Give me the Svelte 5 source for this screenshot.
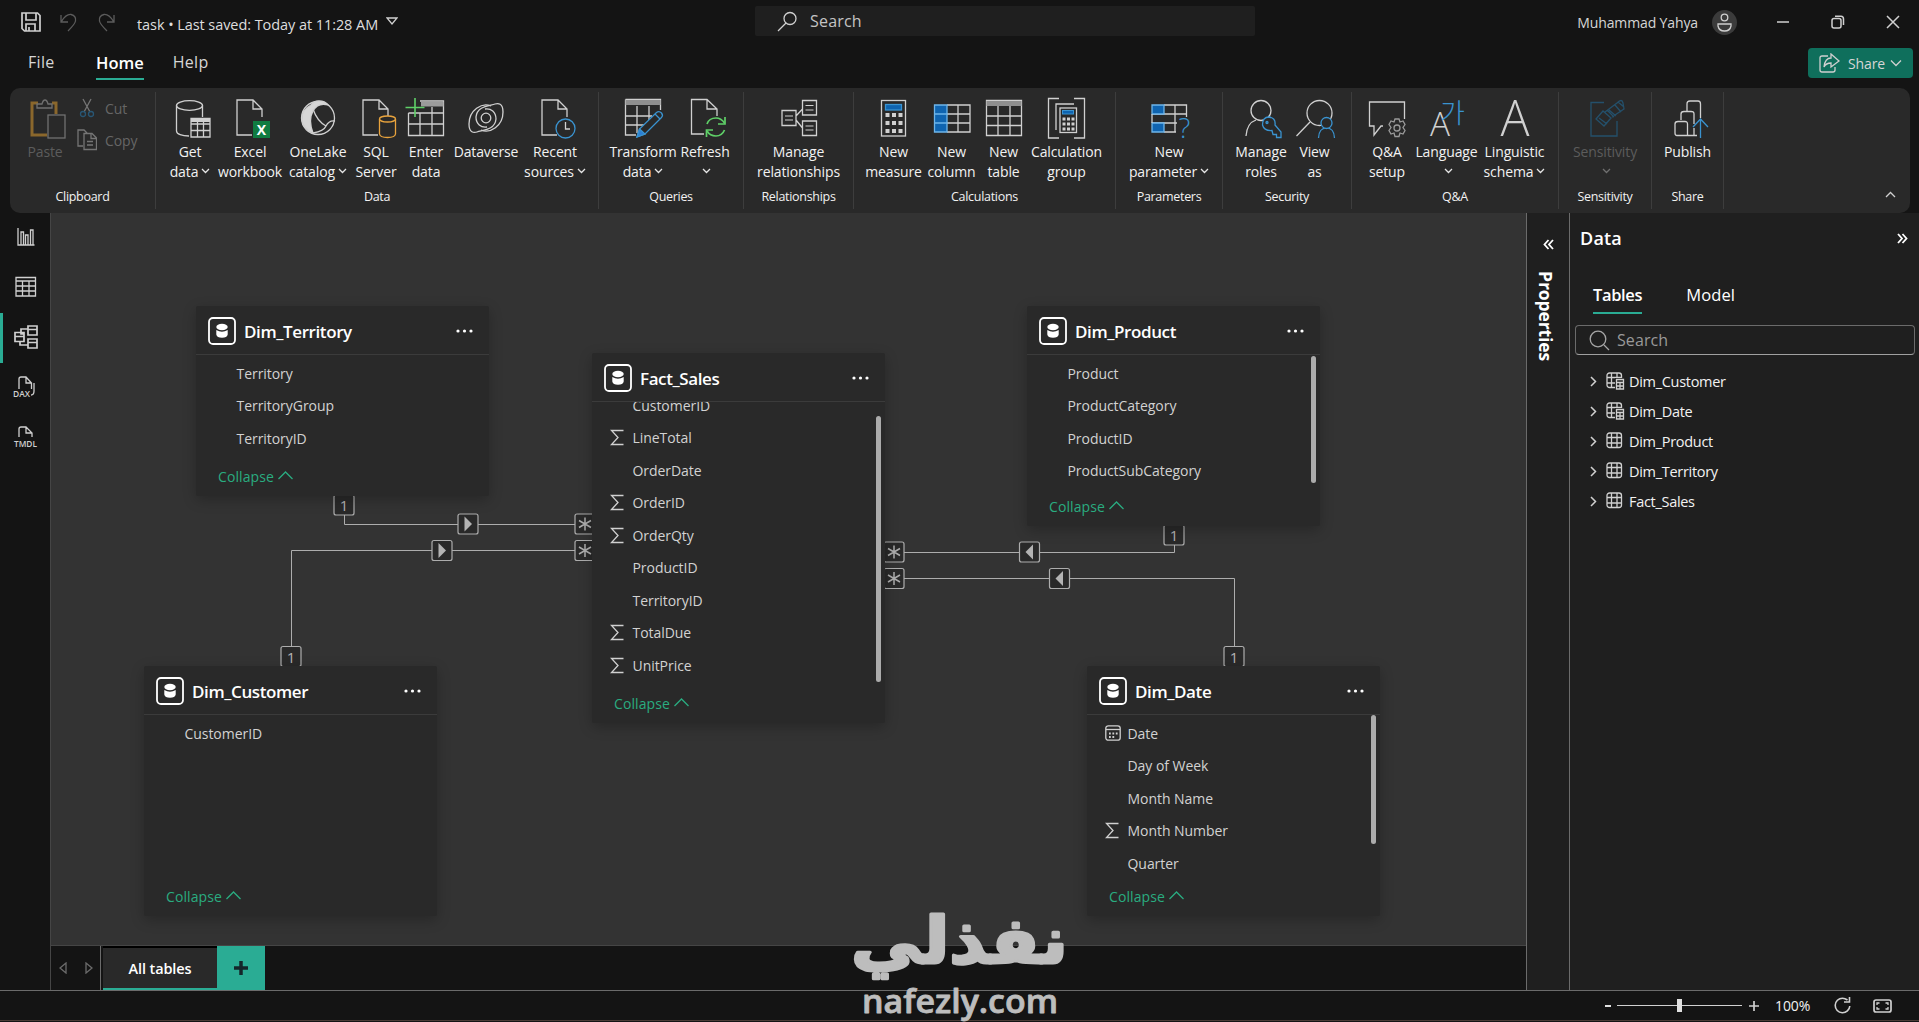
<script lang="ts">
  interface Command {
    icon: string;
    lines: string[];
    width: number;
    menu?: boolean;
    disabled?: boolean;
  }
  interface Group {
    label: string;
    width: number;
    commands: Command[];
  }
  interface Field {
    name: string;
    icon?: 'sum' | 'date';
  }
  interface TableCard {
    name: string;
    x: number;
    y: number;
    height: number;
    fields: Field[];
    scrolled?: boolean;
    thumb?: { top: number; height: number };
  }

  const groups: Group[] = [
    {
      label: 'Data',
      width: 443,
      commands: [
        { icon: 'get', lines: ['Get', 'data'], width: 44, menu: true },
        { icon: 'excel', lines: ['Excel', 'workbook'], width: 76 },
        { icon: 'onelake', lines: ['OneLake', 'catalog'], width: 60, menu: true },
        { icon: 'sql', lines: ['SQL', 'Server'], width: 56 },
        { icon: 'enter', lines: ['Enter', 'data'], width: 44 },
        { icon: 'dataverse', lines: ['Dataverse'], width: 76 },
        { icon: 'recent', lines: ['Recent', 'sources'], width: 62, menu: true }
      ]
    },
    {
      label: 'Queries',
      width: 145,
      commands: [
        { icon: 'transform', lines: ['Transform', 'data'], width: 68, menu: true },
        { icon: 'refresh', lines: ['Refresh', ''], width: 56, menu: true }
      ]
    },
    {
      label: 'Relationships',
      width: 110,
      commands: [{ icon: 'relations', lines: ['Manage', 'relationships'], width: 108 }]
    },
    {
      label: 'Calculations',
      width: 262,
      commands: [
        { icon: 'measure', lines: ['New', 'measure'], width: 60 },
        { icon: 'column', lines: ['New', 'column'], width: 56 },
        { icon: 'table', lines: ['New', 'table'], width: 48 },
        { icon: 'calc', lines: ['Calculation', 'group'], width: 78 }
      ]
    },
    {
      label: 'Parameters',
      width: 107,
      commands: [{ icon: 'parameter', lines: ['New', 'parameter'], width: 105, menu: true }]
    },
    {
      label: 'Security',
      width: 129,
      commands: [
        { icon: 'roles', lines: ['Manage', 'roles'], width: 55 },
        { icon: 'viewas', lines: ['View', 'as'], width: 52 }
      ]
    },
    {
      label: 'Q&A',
      width: 207,
      commands: [
        { icon: 'qa', lines: ['Q&A', 'setup'], width: 50 },
        { icon: 'language', lines: ['Language', ''], width: 69, menu: true },
        { icon: 'linguistic', lines: ['Linguistic', 'schema'], width: 67, menu: true }
      ]
    },
    {
      label: 'Sensitivity',
      width: 93,
      commands: [{ icon: 'sensitivity', lines: ['Sensitivity', ''], width: 91, menu: true, disabled: true }]
    },
    {
      label: 'Share',
      width: 72,
      commands: [{ icon: 'publish', lines: ['Publish'], width: 71 }]
    }
  ];

  const cards: TableCard[] = [
    {
      name: 'Dim_Territory',
      x: 145,
      y: 93,
      height: 190,
      fields: [{ name: 'Territory' }, { name: 'TerritoryGroup' }, { name: 'TerritoryID' }]
    },
    {
      name: 'Fact_Sales',
      x: 541,
      y: 140,
      height: 370,
      scrolled: true,
      thumb: { top: 63, height: 266 },
      fields: [
        { name: 'CustomerID' },
        { name: 'LineTotal', icon: 'sum' },
        { name: 'OrderDate' },
        { name: 'OrderID', icon: 'sum' },
        { name: 'OrderQty', icon: 'sum' },
        { name: 'ProductID' },
        { name: 'TerritoryID' },
        { name: 'TotalDue', icon: 'sum' },
        { name: 'UnitPrice', icon: 'sum' }
      ]
    },
    {
      name: 'Dim_Product',
      x: 976,
      y: 93,
      height: 220,
      thumb: { top: 50, height: 127 },
      fields: [
        { name: 'Product' },
        { name: 'ProductCategory' },
        { name: 'ProductID' },
        { name: 'ProductSubCategory' }
      ]
    },
    { name: 'Dim_Customer', x: 93, y: 453, height: 250, fields: [{ name: 'CustomerID' }] },
    {
      name: 'Dim_Date',
      x: 1036,
      y: 453,
      height: 250,
      thumb: { top: 49, height: 129 },
      fields: [
        { name: 'Date', icon: 'date' },
        { name: 'Day of Week' },
        { name: 'Month Name' },
        { name: 'Month Number', icon: 'sum' },
        { name: 'Quarter' }
      ]
    }
  ];

  const lines = [
    'M293 283V311H542',
    'M240 453V337H542',
    'M833 339H1123V312',
    'M833 365H1183V453'
  ];
  const ends = [
    { x: 293, y: 292, kind: 'one' },
    { x: 240, y: 443.5, kind: 'one' },
    { x: 1123, y: 322, kind: 'one' },
    { x: 1183, y: 443.5, kind: 'one' },
    { x: 534, y: 311, kind: 'many' },
    { x: 534, y: 337.5, kind: 'many' },
    { x: 843, y: 339, kind: 'many' },
    { x: 843, y: 365.5, kind: 'many' },
    { x: 417, y: 311, kind: 'right' },
    { x: 391, y: 337.5, kind: 'right' },
    { x: 978.5, y: 339, kind: 'left' },
    { x: 1008.5, y: 365.5, kind: 'left' }
  ];

  const tables = [
    { name: 'Dim_Customer', calculated: true },
    { name: 'Dim_Date', calculated: true },
    { name: 'Dim_Product', calculated: false },
    { name: 'Dim_Territory', calculated: false },
    { name: 'Fact_Sales', calculated: false }
  ];

  const views = ['report', 'data', 'model', 'dax', 'tmdl'];
  let activeView = $state('model');
</script>

{#snippet caret()}
  <svg class="caret" width="9" height="6" viewBox="0 0 9 6"><path d="M1 1l3.5 3.5L8 1" /></svg>
{/snippet}

{#snippet page()}
  <path d="M2 38H-13V3H3L12 12V20M3 3V12H12" />
{/snippet}

{#snippet ribbonIcon(name: string)}
  <svg class="ribbon-icon" width="44" height="44" viewBox="-22 0 44 44">
    {#if name === 'paste'}
      <g class="dim">
        <path d="M-7 6H-13V38H2M7 6H11V17" stroke="#8a672c" stroke-width="3" />
        <path d="M-8 11V7H-3Q-2 3 0 3Q2 3 3 7H7V11Z" />
        <rect x="3" y="18" width="17" height="23" fill="#292929" />
      </g>
    {:else if name === 'get'}
      <ellipse cx="-.5" cy="8.5" rx="13" ry="4.8" />
      <path d="M-13.5 8.5V34C-13.5 37 -8 39 -1 39M12.500 8.500V20" />
      <path d="M1 21.500H20V40H1ZM1 27H20M1 33.500H20M7.500 25V40M13.500 25V40" />
      <path d="M1 23.500H20" stroke-width="3" />
    {:else if name === 'excel'}
      {@render page()}
      <rect x="3" y="24" width="17" height="17" fill="#107c41" stroke="none" />
      <text x="11.500" y="37.500" class="glyph-x">X</text>
    {:else if name === 'onelake'}
      <circle cx="0" cy="21" r="16.500" />
      <path d="M-7 8Q-4 4 1 4Q7 4 10 8Q0 5 -5 14Q-10 23 -5 36Q-15 32 -16 23Q-17 13 -7 8Z" fill="#d6d6d6" />
      <path d="M-5 12Q-1 24 8 29M-5 36Q6 34 8 29Q11 23 17 24" />
    {:else if name === 'sql'}
      {@render page()}
      <g stroke="#e8a33d">
        <rect x="3" y="19" width="17" height="22" fill="#292929" stroke="none" />
        <ellipse cx="11.500" cy="22" rx="8" ry="3" />
        <path d="M3.500 22V37Q4 40.500 11.500 40.500Q19 40.500 19.500 37V22" />
      </g>
    {:else if name === 'enter'}
      <path d="M-17.500 16V38.500H17.500V4H-6M-17.500 16H17.500M-17.500 27H17.500M-6 16V38.500M6 10V38.500" />
      <path d="M-5 7H17.500" stroke="#9b9b9b" stroke-width="5" />
      <path d="M-11 1V20M-20.500 10.500H-1.500" stroke="#5fd068" stroke-width="1.600" />
    {:else if name === 'dataverse'}
      <circle cx="0" cy="21" r="4.800" />
      <path d="M5 9C-4 5 -17 13 -17 27C-17 36 -12 36 -9 35C-3 33 9 33 10 22C10 15 5 11 -1 12" />
      <path d="M-5 33C4 37 17 29 17 15C17 6 12 6 9 7C3 9 -9 9 -10 20C-10 27 -5 31 1 30" />
    {:else if name === 'recent'}
      {@render page()}
      <circle cx="10.500" cy="31.500" r="9.500" fill="#292929" stroke="#3a93d0" />
      <path d="M10.500 25V32H15" />
    {:else if name === 'transform'}
      <path d="M-17.500 2.500H17.500V13M-17.500 2.500V38H-7M-17.500 19H9M-17.500 28H1M-6 9V36M6 9V23" />
      <path d="M-17.500 5.500H17.500" stroke="#8f8f8f" stroke-width="5" />
      <g stroke="#3a93d0">
        <path d="M-6 40L-3.500 32L13.500 15.500Q16 13.500 18.500 16Q20.500 18.500 18.500 20.500L2 37Z" fill="#292929" />
        <path d="M-6 40L-3.500 32L2 37Z" fill="#2b7fd4" />
        <path d="M12 17L17 22" />
      </g>
    {:else if name === 'refresh'}
      <path d="M-1 37H-13.500V2.500H2L12 12V19M2 2.500V12H12" />
      <g stroke="#5fd068" stroke-width="1.700">
        <path d="M2 27Q4 21 11 21Q16 21 19.500 26M19.500 33Q17 39 11 39Q5 39 2 34" />
        <path d="M20 20V27H13M1.500 40V33H8" />
      </g>
    {:else if name === 'relations'}
      <path d="M-17 13.500H-3V28.500H-17ZM3.500 3.500H17.500V18H3.500ZM3.500 24H17.500V38.500H3.500ZM-3 19L3.500 12M-3 23L3.500 31" />
      <path d="M-14 19H-6M-14 23H-6M6.500 8.500H14.500M6.500 13H14.500M6.500 29H14.500M6.500 33H14.500" stroke-width="1" />
    {:else if name === 'measure'}
      <rect x="-12.500" y="3.500" width="24" height="35.500" />
      <rect x="-8.500" y="7.500" width="16" height="5.500" fill="#0f64b0" stroke="#3a93d0" />
      <path d="M-8.500 18H8.500M-8.500 26H8.500M-8.500 34H8.500" stroke-width="4" stroke-dasharray="4 2.500" />
    {:else if name === 'column'}
      <path d="M-5 8H18V35H-5M-5 17H18M-5 26H18M6 8V35" />
      <path d="M-17.500 8H-5V35H-17.500ZM-17.500 17H-5M-17.500 26H-5" fill="#0f64b0" stroke="#6db5ea" />
    {:else if name === 'table'}
      <path d="M-17.500 3.500H17.500V38.500H-17.500ZM-17.500 19H17.500M-17.500 28.500H17.500M-6 9V38.500M6 9V38.500" />
      <path d="M-17.500 6.500H17.500" stroke="#8f8f8f" stroke-width="5" />
    {:else if name === 'calc'}
      <path d="M-8 1.500H-18.500V41H-8M7 1.500H17.500V41H7" />
      <path d="M-11 33V7H7" />
      <rect x="-7" y="11" width="16.500" height="24.500" />
      <rect x="-4.500" y="13.500" width="11" height="3.500" fill="#0f64b0" stroke="#3a93d0" stroke-width="1" />
      <path d="M-4.500 22H7.500M-4.500 27H7.500M-4.500 32H7.500" stroke-width="3" stroke-dasharray="3 1.500" />
    {:else if name === 'parameter'}
      <path d="M-5 8H17.500V20M-5 35H7M-17 17H17.500M-17 26H8M6 8V35" />
      <path d="M-17 8H-5V17H-17ZM-17 26H-5V35H-17Z" fill="#0f64b0" stroke="#6db5ea" />
      <path d="M-17 17V26" />
      <text x="15.500" y="41" class="glyph-q">?</text>
    {:else if name === 'roles'}
      <circle cx="0" cy="13.500" r="10" />
      <path d="M-15 39Q-14 26 -5 23" />
      <g stroke="#3a93d0">
        <path d="M11 33.500Q3 34 1.500 28Q1.500 20 8 20Q15 21 14 28L20 35V40.500H15.500V37.500H12Z" fill="#292929" />
        <circle cx="6" cy="25.500" r="1" />
      </g>
    {:else if name === 'viewas'}
      <circle cx="4.500" cy="16" r="12.500" />
      <path d="M-5 25L-18.500 39" />
      <g stroke="#3a93d0" fill="#292929">
        <path d="M3.500 41C4 34 6 31 11.500 31C17 31 19 34 19.500 41" />
        <circle cx="11.500" cy="26" r="5.500" />
      </g>
    {:else if name === 'qa'}
      <path d="M-4 29H-6L-13 38V29H-17.500V5H17.500V22" />
      <g stroke="#9b9b9b">
        <path d="M8 22h4l1 3 3-1 2 3.500-2 3 2 3-2 3.500-3-1-1 3.500h-4l-1-3.500-3 1-2-3.500 2-3-2-3L4 24l3 1z" fill="#292929" />
        <circle cx="10" cy="31" r="3" />
      </g>
    {:else if name === 'language'}
      <text x="-17" y="39" class="glyph-a" font-size="33" textLength="20" lengthAdjust="spacingAndGlyphs">A</text>
      <text x="-7" y="26" class="glyph-ga">가</text>
    {:else if name === 'linguistic'}
      <text x="-14.500" y="39" class="glyph-a" font-size="49" textLength="29" lengthAdjust="spacingAndGlyphs">A</text>
    {:else if name === 'sensitivity'}
      <g stroke="#24506b">
        <path d="M-1 5.500H-14V39H12V24" />
        <path d="M-9 22L-2 14L6 21L-1 29ZM-6 21L2 27M2 13L9 20M0 15L12 6Q17 1 18 6L19 12L7 20M10 8L16 15M13 5L19 10M4 13L11 19" />
      </g>
    {:else if name === 'publish'}
      <path d="M-1 14V7Q-1 4 2 4H10Q12.500 4 12.500 7V21M-7 23V17Q-7 14.500 -4 14.500H3Q6 14.500 6 17V27M-13 27Q-13 24.500 -10 24.500H-3Q-.5 24.500 -.5 27V38.500H-11Q-13 38.500 -13 36ZM-.5 38.500H9M6 31V38.500" />
      <path d="M12.500 41V22M5 30L12.500 22L20 30" stroke="#3a93d0" />
    {/if}
  </svg>
{/snippet}

{#snippet command(c: Command)}
  <button class="command" class:disabled={c.disabled} style:width="{c.width}px">
    {@render ribbonIcon(c.icon)}
    {#each c.lines as line, i}
      <span class="line">
        {line}
        {#if c.menu && i === c.lines.length - 1}{@render caret()}{/if}
      </span>
    {/each}
  </button>
{/snippet}

<div class="app">
  <header class="titlebar">
    <div class="quick">
      <svg width="20" height="20" viewBox="0 0 20 20"><path d="M1 1H16.500L19 3.500V19H3.500L1 16.500ZM5 1V8H15V1M5 19V12H14V19M8 15V19" stroke-width="1.700" /></svg>
      <svg class="off" width="18" height="19" viewBox="0 0 18 19"><path d="M1 2V9H8M1.500 8.500Q6 1 11 1.500Q16.500 3 15.500 8Q15 11 8 18" /></svg>
      <svg class="off" width="18" height="19" viewBox="0 0 18 19"><path d="M17 2V9H10M16.500 8.500Q12 1 7 1.500Q1.500 3 2.500 8Q3 11 10 18" /></svg>
    </div>
    <span class="filename">task • Last saved: Today at 11:28 AM</span>
    <svg class="title-caret" width="12" height="8" viewBox="0 0 12 8"><path d="M1 1H11L6 7Z" /></svg>
    <div class="global-search">
      <svg width="21" height="21" viewBox="0 0 21 21"><circle cx="13" cy="7.500" r="6" /><path d="M9 12L1 20" /></svg>
      <span>Search</span>
    </div>
    <div class="account">
      <span class="user">Muhammad Yahya</span>
      <svg width="25" height="25" viewBox="0 0 25 25">
        <circle cx="12.500" cy="12.500" r="12.500" fill="#3b3b3b" stroke="none" />
        <circle cx="12.500" cy="7.500" r="3.300" />
        <path d="M6 14H19V16Q18 21 12.500 21Q7 21 6 16Z" />
      </svg>
      <svg class="win" width="14" height="14" viewBox="0 0 14 14"><path d="M1 7H13" /></svg>
      <svg class="win" width="14" height="14" viewBox="0 0 14 14"><rect x="1" y="3.500" width="9" height="9.500" rx="2" /><path d="M4 1.200H10Q12.500 1.200 12.500 4V10" /></svg>
      <svg class="win" width="14" height="14" viewBox="0 0 14 14"><path d="M1 1L13 13M13 1L1 13" /></svg>
    </div>
  </header>

  <nav class="menu">
    <span class="file">File</span>
    <span class="home">Home</span>
    <span class="help">Help</span>
    <button class="share">
      <svg width="21" height="20" viewBox="0 0 21 20"><path d="M9 3H3Q1 3 1 5V17Q1 19 3 19H14Q16 19 16 17V14M12 1L20 8L12 14V10Q7 10 5 14Q6 5 12 5Z" /></svg>
      Share
      <svg width="12" height="8" viewBox="0 0 12 8"><path d="M1 1.500L6 6.500L11 1.500" /></svg>
    </button>
  </nav>

  <div class="ribbon">
    <section class="group clipboard">
      <div class="commands">
        <button class="command disabled paste">{@render ribbonIcon('paste')}<span class="line">Paste</span></button>
        <div class="clip-list">
          <span>
            <svg width="20" height="22" viewBox="0 0 20 22">
              <path d="M6 2L13 15M14 2L7 15" /><g stroke="#285674"><circle cx="6" cy="17" r="2.500" /><circle cx="14" cy="17" r="2.500" /></g>
            </svg>
            Cut
          </span>
          <span>
            <svg width="20" height="22" viewBox="0 0 20 22"><path d="M6 17H1V1H7L10 4M7 4.500H15L19.500 9V20.500H7ZM14 5V9.500H19M10 12.500H16M10 16H16" /></svg>
            Copy
          </span>
        </div>
      </div>
      <h2>Clipboard</h2>
    </section>
    {#each groups as group}
      <section class="group" style:width="{group.width}px">
        <div class="commands">
          {#each group.commands as c}{@render command(c)}{/each}
        </div>
        <h2>{group.label}</h2>
      </section>
    {/each}
    <svg class="ribbon-toggle" width="11" height="7" viewBox="0 0 11 7"><path d="M1 6L5.500 1.500L10 6" /></svg>
  </div>

  <div class="workspace">
    <aside class="views">
      {#each views as view}
        <button class="view" class:active={activeView === view} aria-label={view} onclick={() => (activeView = view)}>
          <svg width="26" height="24" viewBox="0 0 26 24">
            {#if view === 'report'}
              <path d="M5 3V20H21.500M8 20V7H10.500V20M12.500 20V10H15V20M17.500 20V5H20V20" />
            {:else if view === 'data'}
              <path d="M3 2.500H22.500V21H3ZM3 6H22.500M3 11H22.500M3 16H22.500M9.500 6V21M16 6V21" />
            {:else if view === 'model'}
              <path d="M15 1H24V10H15ZM15 4.500H24M15 14H24V23H15ZM15 17.500H24M2 7.500H11V16.500H2ZM2 11.500H11M11 9H8V4H15M7 16.500V20H15" stroke-width="1.700" />
            {:else if view === 'dax'}
              <path d="M6 14V4Q6 2 8 2H13L18.500 8V14M13 2V8H18.500M21 8V16Q21 20 18 20" />
              <text x="0" y="21.500" textLength="17" lengthAdjust="spacingAndGlyphs">DAX</text>
            {:else}
              <path d="M6 12V4Q6 2 8 2H13L19 8V12M13 2V8H19" />
              <text x="1" y="21.500" textLength="23" lengthAdjust="spacingAndGlyphs">TMDL</text>
            {/if}
          </svg>
        </button>
      {/each}
    </aside>

    <main>
      <div class="canvas">
        <svg class="relations" width="1475" height="732" viewBox="0 0 1475 732">
          {#each lines as d}<path {d} transform="translate(.5 .5)" />{/each}
          {#each ends as end}
            <g transform="translate({end.x} {end.y})">
              <rect x="-10" y="-10" width="20" height="20" rx="2" />
              {#if end.kind === 'one'}
                <text y="6">1</text>
              {:else if end.kind === 'many'}
                <path d="M0 -6.500V6.500M-6 -3.500L6 3.500M6 -3.500L-6 3.500" stroke-width="1.500" />
              {:else if end.kind === 'right'}
                <path class="solid" d="M-3.500 -7.500L4 0L-3.500 7.500Z" />
              {:else}
                <path class="solid" d="M3.500 -7.500L-4 0L3.500 7.500Z" />
              {/if}
            </g>
          {/each}
        </svg>

        {#each cards as card}
          <article class="card" style:left="{card.x}px" style:top="{card.y}px" style:height="{card.height}px">
            <header>
              <svg width="28" height="28" viewBox="0 0 28 28">
                <rect x="1" y="1" width="26" height="26" rx="4" stroke-width="1.800" />
                <ellipse cx="14" cy="10" rx="5.700" ry="3.200" class="white" />
                <path class="white" d="M8.300 13Q14 16.500 19.700 13V17.500Q19 20.800 14 20.800Q9 20.800 8.300 17.500Z" />
              </svg>
              <strong>{card.name}</strong>
              <svg class="dots" width="17" height="4" viewBox="0 0 17 4"><circle cx="2" cy="2" r="1.600" /><circle cx="8.500" cy="2" r="1.600" /><circle cx="15" cy="2" r="1.600" /></svg>
            </header>
            <ul class:scrolled={card.scrolled}>
              {#each card.fields as field}
                <li>
                  <span class="field-icon">
                    {#if field.icon === 'sum'}
                      <svg width="14" height="17" viewBox="0 0 14 17"><path d="M13.500 1.500H1.500L8 8.500L1.500 15.500H13.500" /></svg>
                    {:else if field.icon === 'date'}
                      <svg width="16" height="16" viewBox="0 0 16 16"><rect x=".8" y=".8" width="14.400" height="14.400" rx="2.500" /><path d="M1 4.500H15" /><path d="M4 8.500H13M4 12H10" stroke-width="1.800" stroke-dasharray="1.800 1.600" /></svg>
                    {/if}
                  </span>
                  {field.name}
                </li>
              {/each}
            </ul>
            <footer>
              Collapse
              <svg width="15" height="9" viewBox="0 0 15 9"><path d="M.5 8L7.500 1L14.500 8" /></svg>
            </footer>
            {#if card.thumb}
              <div class="thumb" style:top="{card.thumb.top}px" style:height="{card.thumb.height}px"></div>
            {/if}
          </article>
        {/each}
      </div>

      <div class="layouts">
        <div class="pager">
          <svg width="8" height="12" viewBox="0 0 8 12"><path d="M7 1V11L1 6Z" /></svg>
          <svg width="8" height="12" viewBox="0 0 8 12"><path d="M1 1V11L7 6Z" /></svg>
        </div>
        <div class="layout-tab">All tables</div>
        <button class="add" aria-label="Add layout"><svg width="14" height="14" viewBox="0 0 14 14"><path d="M7 0V14M0 7H14" /></svg></button>
      </div>
    </main>

    <aside class="properties">
      <svg width="11" height="11" viewBox="0 0 11 11"><path d="M5.500 1L1.500 5.500L5.500 10M10 1L6 5.500L10 10" /></svg>
      <span>Properties</span>
    </aside>

    <aside class="data-pane">
      <div class="pane-head">
        <h1>Data</h1>
        <svg width="11" height="11" viewBox="0 0 11 11"><path d="M1 1L5 5.500L1 10M5.500 1L9.500 5.500L5.500 10" /></svg>
      </div>
      <div class="pane-tabs">
        <span class="on">Tables</span>
        <span>Model</span>
      </div>
      <div class="pane-search">
        <svg width="21" height="21" viewBox="0 0 21 21"><circle cx="9" cy="9" r="7.800" /><path d="M15 15L20 20" /></svg>
        Search
      </div>
      <ul class="tree">
        {#each tables as table}
          <li>
            <svg class="chev" width="7" height="11" viewBox="0 0 7 11"><path d="M1 1L5.500 5.500L1 10" /></svg>
            <svg width="19" height="18" viewBox="0 0 19 18">
              <rect x="1" y="1" width="14.500" height="14.500" rx="2.500" />
              <path d="M1 5.500H15.500M1 11H15.500M5.500 1V15.500M11 1V15.500" />
              {#if table.calculated}
                <rect x="9" y="6" width="10" height="12" fill="#1f1f1f" stroke="none" />
                <path d="M10.500 7.500H17.500V17H10.500ZM10.500 10.500H17.500M10.500 14H17.500M14 10V17" />
              {/if}
            </svg>
            {table.name}
          </li>
        {/each}
      </ul>
    </aside>
  </div>

  <footer class="status">
    <span class="minus"></span>
    <span class="slider"><i></i></span>
    <svg width="10" height="10" viewBox="0 0 10 10"><path d="M5 0V10M0 5H10" stroke-width="1.700" /></svg>
    <span class="zoom">100%</span>
    <svg class="reset" width="17" height="17" viewBox="0 0 17 17"><path d="M13.500 3Q11 1.200 8.500 1.200A7.300 7.300 0 1 0 15.800 9M15.500 0V5H10" stroke-width="1.600" /></svg>
    <svg class="fit" width="19" height="14" viewBox="0 0 19 14"><rect x="1" y="1" width="17" height="12" rx="2" stroke-width="1.700" /><path d="M4 6V4H6.500M12.500 4H15V6M15 8V10H12.500M6.500 10H4V8" /></svg>
  </footer>

  <svg class="watermark" width="230" height="114" viewBox="0 0 230 114">
    <text class="arabic" x="222" y="55" textLength="217" lengthAdjust="spacingAndGlyphs" direction="rtl">نفذلي</text>
    <text class="latin" x="16" y="105" textLength="196" lengthAdjust="spacingAndGlyphs">nafezly.com</text>
  </svg>
</div>

<style>
  :global(body) {
    background: #141414;
    overflow: hidden;
  }
  .app {
    position: relative;
    display: flex;
    flex-direction: column;
    width: 1919px;
    height: 1022px;
    background: #141414;
    color: #f2f2f2;
    font-family: 'Open Sans', 'Noto Sans', sans-serif;
    font-size: 14px;
    letter-spacing: -0.12px;
    white-space: nowrap;
  }
  button {
    padding: 0;
    border: 0;
    background: none;
    color: inherit;
    font: inherit;
    letter-spacing: inherit;
  }
  ul {
    margin: 0;
    padding: 0;
    list-style: none;
  }
  svg {
    flex: none;
    fill: none;
    stroke: #d0d0d0;
    stroke-width: 1.3;
  }
  svg text {
    stroke: none;
    fill: #d0d0d0;
    letter-spacing: 0;
  }

  .titlebar {
    display: flex;
    align-items: center;
    height: 44px;
    padding-left: 21px;
  }
  .quick {
    display: flex;
    align-items: center;
    gap: 19px;
    width: 116px;
  }
  .quick .off {
    stroke: #5c5c5c;
  }
  .filename {
    width: 243px;
    padding-top: 5px;
    color: #dedede;
    font-size: 14.5px;
    letter-spacing: -0.07px;
  }
  .title-caret {
    margin: 0 0 2px 6px;
  }
  .global-search {
    display: flex;
    align-items: center;
    gap: 12px;
    width: 478px;
    height: 30px;
    margin: 0 auto 2px 357px;
    padding-left: 22px;
    border-radius: 2px;
    background: #1f1f1f;
    color: #c4c4c4;
    font-size: 16px;
    letter-spacing: 0.2px;
  }
  .account {
    display: flex;
    align-items: center;
    padding-right: 19px;
  }
  .user {
    margin-right: 14px;
    font-size: 14px;
    color: #d6d6d6;
  }
  .win {
    margin-left: 41px;
    stroke-width: 1.5;
  }
  .win:nth-of-type(2) {
    margin-left: 39px;
  }

  .menu {
    display: flex;
    align-items: flex-start;
    height: 44px;
    padding: 4px 6px 0 28px;
    box-sizing: border-box;
    font-size: 16px;
    line-height: 29px;
    color: #d6d6d6;
  }
  .file {
    width: 68px;
    letter-spacing: 0.3px;
  }
  .home {
    height: 30px;
    margin-right: 29px;
    border-bottom: 2px solid #2aac94;
    color: #fff;
    font-size: 16.5px;
    font-weight: 600;
    letter-spacing: 0;
  }
  .help {
    letter-spacing: 0.3px;
  }
  .share {
    display: flex;
    align-items: center;
    justify-content: center;
    gap: 8px;
    width: 105px;
    height: 30px;
    margin-left: auto;
    border-radius: 4px;
    background: #0f6f5c;
    font-size: 14px;
  }
  .share svg:last-child {
    margin-left: -3px;
  }

  .ribbon {
    display: flex;
    position: relative;
    z-index: 1;
    width: 1900px;
    height: 125px;
    margin-left: 10px;
    padding-top: 4px;
    box-sizing: border-box;
    border-radius: 10px;
    background: #292929;
  }
  .group {
    display: flex;
    flex-direction: column;
    align-items: center;
    height: 117px;
    box-sizing: border-box;
    border-right: 1px solid #3d3d3d;
  }
  .group h2 {
    margin: auto 0 3px;
    font-size: 12.5px;
    font-weight: 400;
    line-height: 18px;
    letter-spacing: -0.3px;
  }
  .commands {
    display: flex;
    justify-content: center;
    padding-top: 5px;
  }
  .command {
    display: flex;
    flex-direction: column;
    align-items: center;
  }
  .ribbon-icon {
    width: 44px;
    height: 44px;
    overflow: visible;
  }
  .line {
    display: flex;
    align-items: center;
    height: 20px;
  }
  .caret {
    margin-left: 3px;
    stroke: #e6e6e6;
  }
  .disabled {
    color: #5c5c5c;
  }
  .disabled .caret,
  .dim {
    stroke: #707070;
  }
  .clipboard {
    width: 146px;
  }
  .clipboard .commands {
    align-self: flex-start;
    padding-left: 13px;
  }
  .paste {
    width: 44px;
  }
  .clip-list {
    display: flex;
    flex-direction: column;
    gap: 10px;
    padding: 0 0 0 10px;
    color: #666;
  }
  .clip-list span {
    display: flex;
    align-items: center;
    gap: 8px;
  }
  .clip-list svg {
    stroke: #757575;
  }
  .ribbon-toggle {
    margin: auto 14px 15px auto;
  }
  .glyph-x {
    font-size: 14px;
    font-weight: 700;
    fill: #fff;
    text-anchor: middle;
  }
  .glyph-q {
    font-size: 28px;
    font-weight: 300;
    fill: #3a93d0;
    text-anchor: middle;
  }
  .glyph-a {
    font-weight: 300;
  }
  .glyph-ga {
    font-family: 'Noto Sans CJK KR', sans-serif;
    font-size: 27px;
    font-weight: 300;
    fill: #3a93d0;
  }

  .workspace {
    display: flex;
    height: 777px;
    border-bottom: 1px solid #6b6b6b;
  }
  .views {
    width: 50px;
    border-right: 1px solid #454545;
  }
  .view {
    display: flex;
    align-items: center;
    justify-content: center;
    width: 50px;
    height: 50px;
    border-left: 3px solid transparent;
    border-right: 3px solid transparent;
  }
  .view.active {
    border-left-color: #2aac94;
  }
  .view svg {
    margin: 0 0 2px 1px;
    overflow: visible;
  }
  .view text {
    font-size: 8px;
    font-weight: 600;
  }
  main {
    width: 1475px;
  }
  .canvas {
    position: relative;
    height: 732px;
    overflow: hidden;
    background: #333;
    border-bottom: 1px solid #454545;
  }
  .relations {
    display: block;
    stroke: #adadad;
    stroke-width: 1;
  }
  .relations rect {
    fill: #292929;
    stroke-width: 1.2;
  }
  .relations text {
    fill: #b3b3b3;
    font-size: 15px;
    text-anchor: middle;
  }
  .relations .solid {
    fill: #b3b3b3;
    stroke: none;
  }
  .card {
    position: absolute;
    display: flex;
    flex-direction: column;
    width: 293px;
    border-radius: 2px;
    background: #292929;
    box-shadow: 0 4px 14px rgba(0, 0, 0, 0.24);
  }
  .card header {
    display: flex;
    align-items: center;
    flex: none;
    height: 49px;
    padding: 2px 16px 0 12px;
    box-sizing: border-box;
    border-bottom: 1px solid #3b3b3b;
  }
  .card header svg {
    stroke: #fff;
  }
  .card strong {
    margin: 0 auto 0 8px;
    color: #fff;
    font-size: 17px;
    font-weight: 600;
    letter-spacing: -0.4px;
  }
  .card .dots,
  .card .white {
    fill: #fff;
    stroke: none;
  }
  .card ul {
    flex: 1;
    overflow: hidden;
    padding-top: 2px;
  }
  .card .scrolled {
    padding: 0;
  }
  .scrolled li:first-child {
    margin-top: -13px;
  }
  .card li {
    display: flex;
    align-items: center;
    height: 32.5px;
    padding-left: 18px;
    color: #d2d2d2;
    letter-spacing: -0.05px;
  }
  .field-icon {
    display: flex;
    width: 22.5px;
  }
  .card footer {
    display: flex;
    align-items: center;
    gap: 4px;
    flex: none;
    height: 40px;
    padding-left: 22px;
    color: #2aac80;
    letter-spacing: 0.1px;
  }
  .card footer svg {
    stroke: #2aac80;
    margin-bottom: 2px;
  }
  .thumb {
    position: absolute;
    right: 4px;
    width: 5px;
    border-radius: 3px;
    background: #ababab;
  }

  .layouts {
    display: flex;
    height: 44px;
  }
  .pager {
    display: flex;
    align-items: center;
    justify-content: center;
    gap: 18px;
    width: 49px;
    border-right: 1px solid #6b6b6b;
  }
  .pager svg {
    stroke: #6b6b6b;
  }
  .layout-tab {
    width: 114px;
    margin-left: 2px;
    box-sizing: border-box;
    border-top: 2px solid #000;
    border-bottom: 2px solid #2aac94;
    background: #292929;
    color: #fff;
    font-size: 14.5px;
    font-weight: 600;
    line-height: 41px;
    text-align: center;
  }
  .add {
    display: flex;
    align-items: center;
    justify-content: center;
    width: 48px;
    background: #2aac94;
  }
  .add svg {
    stroke: #14262a;
    stroke-width: 3.5;
  }

  .properties {
    display: flex;
    flex-direction: column;
    align-items: center;
    width: 43px;
    padding-top: 26px;
    box-sizing: border-box;
    border-left: 1px solid #6b6b6b;
    background: #1f1f1f;
  }
  .properties svg,
  .pane-head svg {
    stroke: #fff;
    stroke-width: 1.8;
  }
  .properties span {
    margin: 21px 4px 0 0;
    writing-mode: vertical-rl;
    color: #fff;
    font-size: 17.5px;
    font-weight: 700;
    letter-spacing: -0.1px;
  }
  .data-pane {
    flex: 1;
    border-left: 1px solid #6b6b6b;
    background: #1f1f1f;
  }
  .pane-head {
    display: flex;
    align-items: center;
    justify-content: space-between;
    height: 50px;
    padding: 0 11px 0 10px;
  }
  h1 {
    margin: 0;
    color: #fff;
    font-size: 18px;
    font-weight: 600;
    letter-spacing: 0.2px;
  }
  .pane-tabs {
    display: flex;
    gap: 44px;
    height: 34px;
    padding: 17px 23px 11px;
    color: #fff;
    font-size: 16.5px;
    line-height: 30px;
    letter-spacing: 0.1px;
  }
  .pane-tabs .on {
    border-bottom: 2px solid #2aac94;
    font-weight: 600;
    letter-spacing: -0.35px;
  }
  .pane-search {
    display: flex;
    align-items: center;
    gap: 7px;
    width: 340px;
    height: 30px;
    margin-left: 5px;
    padding-left: 13px;
    box-sizing: border-box;
    border: 1px solid #6b6b6b;
    border-bottom-color: #a0a0a0;
    border-radius: 4px;
    color: #999;
    font-size: 16px;
    letter-spacing: 0.1px;
  }
  .pane-search svg {
    stroke: #a6a6a6;
  }
  .tree {
    padding-top: 11px;
  }
  .tree li {
    display: flex;
    align-items: center;
    height: 30px;
    padding-left: 20px;
    font-size: 14.5px;
    letter-spacing: -0.3px;
  }
  .tree .chev {
    margin-right: 9px;
    stroke-width: 1.5;
  }
  .tree svg:nth-child(2) {
    margin-right: 4px;
  }

  .status {
    display: flex;
    align-items: center;
    justify-content: flex-end;
    height: 29px;
    padding-right: 27px;
    border-bottom: 1px solid #4a3c36;
  }
  .minus {
    width: 6px;
    height: 2px;
    background: #e0e0e0;
  }
  .slider {
    display: flex;
    align-items: center;
    justify-content: center;
    width: 125px;
    height: 13px;
    margin: 0 7px 0 6px;
    background: linear-gradient(#d0d0d0, #d0d0d0) center / 100% 1px no-repeat;
  }
  .slider i {
    width: 5px;
    height: 13px;
    background: #e0e0e0;
  }
  .zoom {
    width: 36px;
    margin: 0 23px 0 16px;
  }
  .fit {
    margin-left: 22px;
  }

  .watermark {
    position: absolute;
    left: 846px;
    top: 908px;
    z-index: 2;
    overflow: visible;
  }
  .watermark text {
    fill: #bdbdbd;
    stroke: #bdbdbd;
  }
  .watermark .arabic {
    font-family: 'DejaVu Sans', sans-serif;
    font-size: 64px;
    font-weight: 700;
    stroke-width: 3;
    stroke-linejoin: round;
  }
  .watermark .latin {
    font-size: 32px;
    font-weight: 600;
    stroke-width: 0.8;
    stroke-linejoin: round;
  }
</style>
